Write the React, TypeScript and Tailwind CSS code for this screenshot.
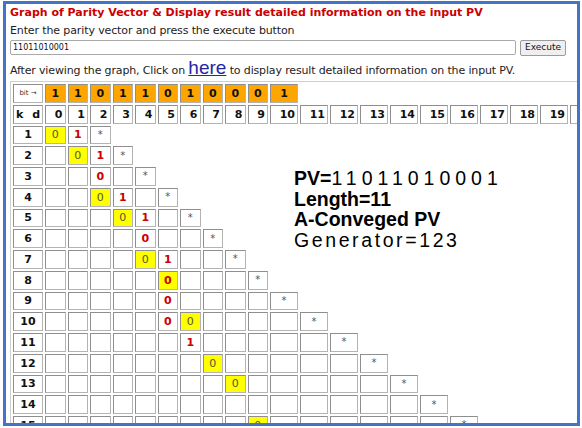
import React from "react";

type Mark = "y0" | "r0" | "r1" | "yr0";

const bits = "11011010001".split("");
const COLS = 22;
const ROWS = 16;

// which cells of row k hold a value (column index -> kind)
const marks: Record<number, Record<number, Mark>> = {
  1: { 0: "y0", 1: "r1" },
  2: { 1: "y0", 2: "r1" },
  3: { 2: "r0" },
  4: { 2: "y0", 3: "r1" },
  5: { 3: "y0", 4: "r1" },
  6: { 4: "r0" },
  7: { 4: "y0", 5: "r1" },
  8: { 5: "yr0" },
  9: { 5: "r0" },
  10: { 5: "r0", 6: "y0" },
  11: { 6: "r1" },
  12: { 7: "y0" },
  13: { 8: "y0" },
  14: {},
  15: { 9: "y0" },
  16: {},
};

const cell =
  "h-[18.75px] p-0 border border-[#b4b4b4] border-t-[#8e8e8e] border-l-[#8e8e8e] leading-none";

function colW(c: number) {
  return c < 10 ? "w-[20.5px] min-w-[20.5px]" : "w-[28px] min-w-[28px]";
}

function DataCell({ mark }: { mark?: Mark }) {
  if (mark === "y0")
    return <td className={`${cell} bg-[#ffff00] text-center text-[#555533]`}>0</td>;
  if (mark === "yr0")
    return <td className={`${cell} bg-[#ffff00] text-center font-bold text-[#cc0000]`}>0</td>;
  if (mark === "r0")
    return <td className={`${cell} text-center font-bold text-[#cc0000]`}>0</td>;
  if (mark === "r1")
    return <td className={`${cell} text-center font-bold text-[#cc0000]`}>1</td>;
  return <td className={cell}></td>;
}

function Graph() {
  const rows = [];
  for (let k = 1; k <= ROWS; k++) {
    const tds = [];
    for (let c = 0; c <= k + 1 && c < COLS; c++) {
      if (c === k + 1) {
        tds.push(
          <td key={c} className={`${cell} text-center text-[10px] text-[#555]`}>
            *
          </td>
        );
      } else {
        tds.push(<DataCell key={c} mark={marks[k]?.[c]} />);
      }
    }
    rows.push(
      <tr key={k}>
        <td className={`${cell} text-center font-bold`}>{k}</td>
        {tds}
      </tr>
    );
  }

  return (
    <table className="ml-[4px] mt-[1px] border-separate border-spacing-[2px] border border-[#cfcfcf] border-b-[#9a9a9a] border-r-[#9a9a9a] text-[11px] text-[#111] [font-family:'DejaVu_Sans',sans-serif]">
      <tbody>
        <tr>
          <td className={`${cell} w-[30px] min-w-[30px] text-center text-[7px] font-normal text-[#333]`}>
            bit →
          </td>
          {bits.map((b, i) => (
            <td key={i} className={`${cell} bg-[#ffa500] text-center font-bold`}>
              {b}
            </td>
          ))}
        </tr>
        <tr>
          <td className={`${cell} font-bold`}>
            <div className="flex justify-between px-[2px]">
              <span>k</span>
              <span>d</span>
            </div>
          </td>
          {Array.from({ length: COLS }, (_, c) => (
            <td key={c} className={`${cell} ${colW(c)} pr-[2px] text-right font-bold`}>
              {c}
            </td>
          ))}
        </tr>
        {rows}
      </tbody>
    </table>
  );
}

export default function App() {
  return (
    <div className="h-[428px] w-[582px] bg-white pt-[1px]">
      <div className="relative ml-[3px] h-[425px] w-[577px] overflow-hidden border-[3px] border-[#4574c6] bg-white [font-family:'DejaVu_Sans',sans-serif] text-[#222]">
        <div className="pl-[4px] pt-[1px]">
          <div className="flex h-[17px] items-center text-[11px] font-bold tracking-[0px] text-[#cc0000]">
            Graph of Parity Vector &amp; Display result detailed information on the input PV
          </div>
          <div className="flex h-[18px] items-center text-[11px] tracking-[-0.12px]">
            Enter the parity vector and press the execute button
          </div>
          <div className="flex h-[17px] items-start gap-[4px]">
            <div className="flex h-[15px] w-[506px] items-center rounded-[2px] border border-[#a9a9a9] pl-[2px] text-[8px] text-[#111]">
              11011010001
            </div>
            <button className="flex h-[16px] w-[46px] items-center justify-center rounded-[2px] border border-[#9a9a9a] bg-[#efefef] text-[9px] text-[#111]">
              Execute
            </button>
          </div>
          <div className="h-[23px] whitespace-nowrap text-[11px] leading-[21px] tracking-[-0.15px]">
            After viewing the graph, Click on{" "}
            <span className="text-[19px] tracking-normal text-[#2626a6] underline [font-family:'Liberation_Sans',sans-serif]">
              here
            </span>{" "}
            to display result detailed information on the input PV.
          </div>
        </div>
        <Graph />
        <div className="absolute left-[288px] top-[164px] text-[19.5px] leading-[20.7px] text-black [font-family:'Liberation_Sans',sans-serif]">
          <div>
            <span className="font-bold">PV=</span>
            <span className="tracking-[5px]">11011010001</span>
          </div>
          <div className="font-bold">Length=11</div>
          <div className="font-bold">A-Conveged PV</div>
          <div className="tracking-[2.6px]">Generator=123</div>
        </div>
      </div>
    </div>
  );
}
